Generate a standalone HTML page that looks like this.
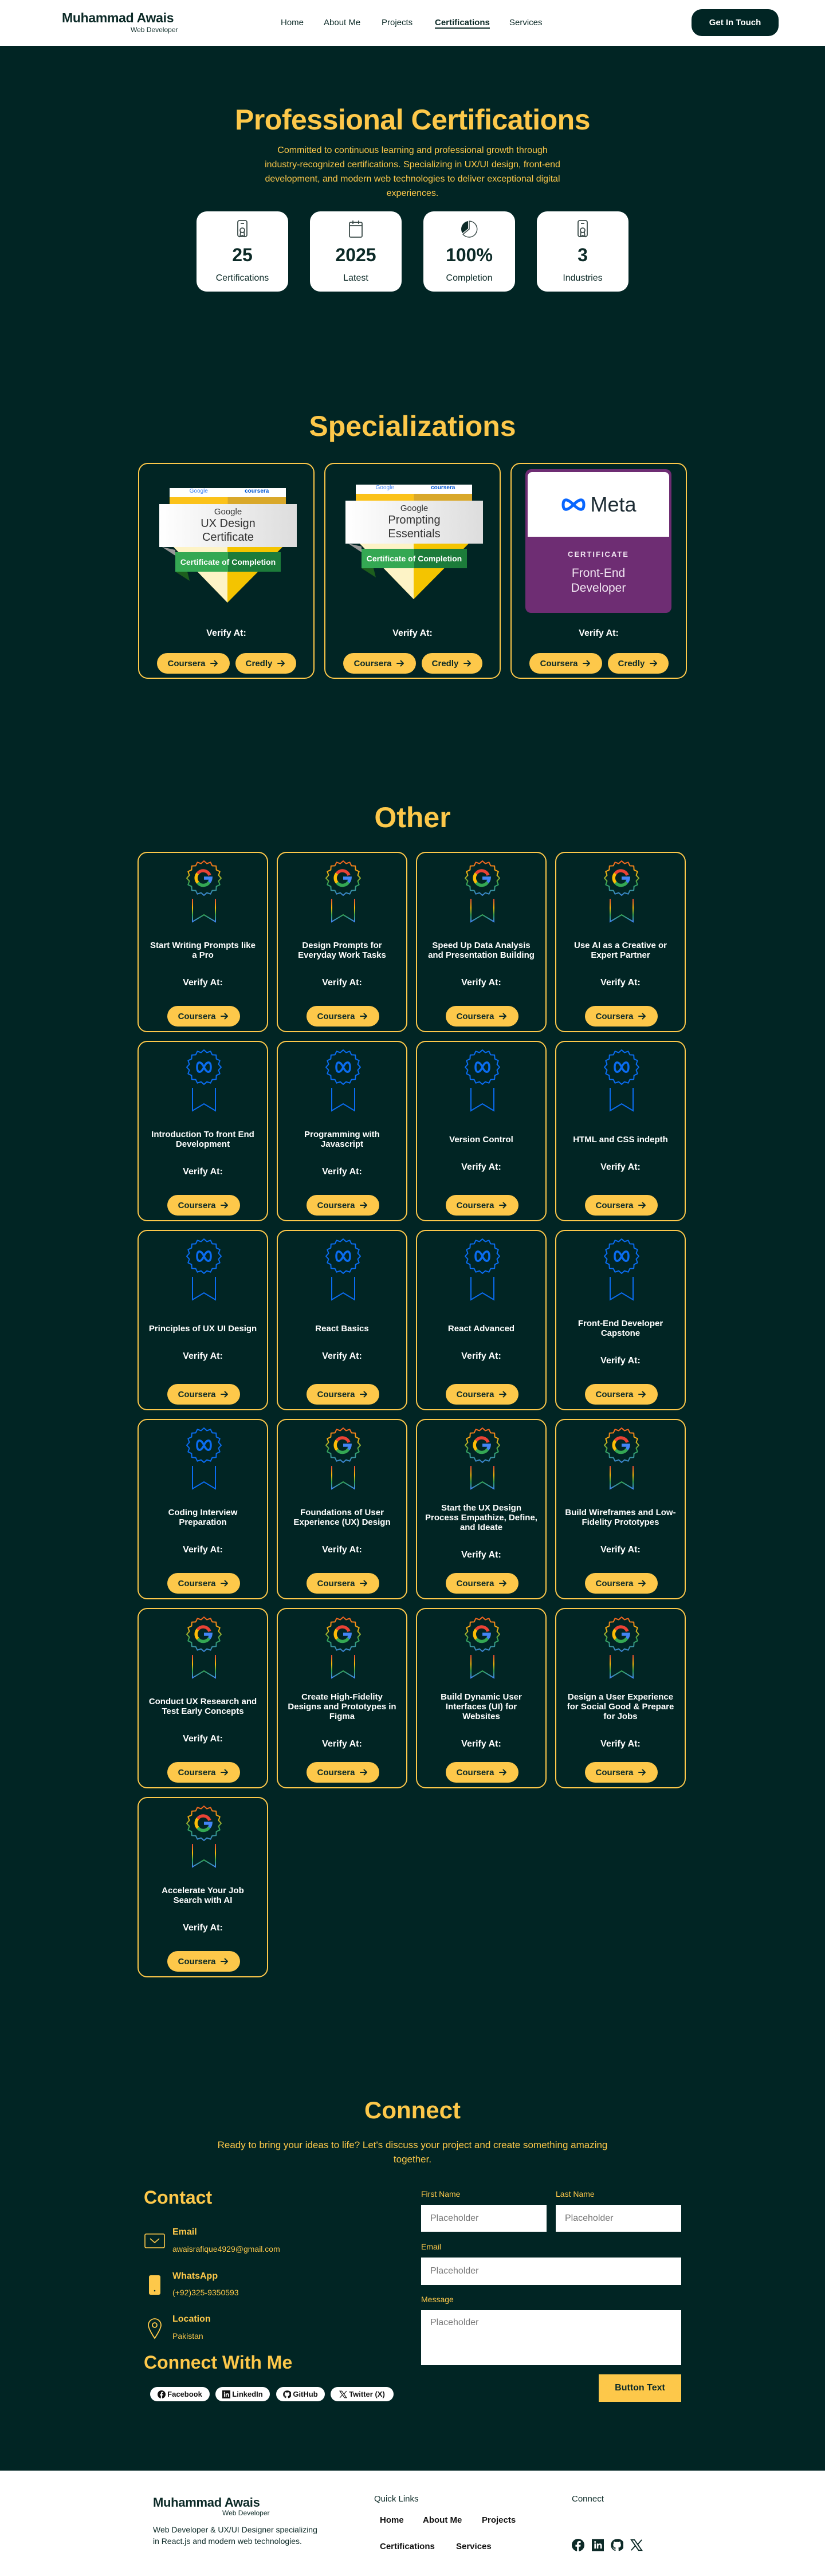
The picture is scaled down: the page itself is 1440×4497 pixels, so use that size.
<!DOCTYPE html>
<html><head><meta charset="utf-8"><title>Certifications</title>
<style>
*{margin:0;padding:0;box-sizing:border-box}
body{width:1440px;height:4497px;background:#012524;font-family:"Liberation Sans",Arial,sans-serif;position:relative;overflow:hidden;color:#fff}
.abs{position:absolute}
.nav{left:0;top:0;width:1440px;height:80px;background:#fff}
.y{color:#fdc84a}
.c{text-align:center}
.stat{position:absolute;top:369px;width:160px;height:140px;background:#fff;border-radius:18px;color:#0c2a27;text-align:center}
.stat svg{position:absolute;left:64px;top:14px}
.card{position:absolute;border:2px solid #fdc84a;border-radius:17px}
.btn{position:absolute;background:#fdc84a;color:#0c2a27;border-radius:18px;font-size:15px;font-weight:700;display:flex;align-items:center;justify-content:center;gap:8px;height:36px}
.oc{width:228px;height:315px}
.oc svg.b{position:absolute;left:81px;top:12px}
.oc .mid{position:absolute;left:8px;right:8px;top:121px;height:148px;display:flex;flex-direction:column;justify-content:center;align-items:center;text-align:center}
.oc .t{font-size:15px;line-height:17px;font-weight:700;color:#fff}
.oc .v{font-size:16px;font-weight:700;margin-top:30px;line-height:20px}
.oc .btn{left:50px;top:267px;width:127px}
.inp{position:absolute;background:#fff;color:#777;font-size:16px;padding-left:16px;display:flex;align-items:center}
.lab{position:absolute;color:#fdc84a;font-size:14px}
.pill{position:absolute;top:4167px;height:25px;background:#fff;border-radius:13px;color:#111;font-size:13px;font-weight:700;display:flex;align-items:center;justify-content:center;gap:3px}
</style></head><body>
<svg width="0" height="0" style="position:absolute">
<defs>
<linearGradient id="gg" x1="0" y1="0" x2="0" y2="1"><stop offset="0" stop-color="#f25c22"/><stop offset=".35" stop-color="#f6b40e"/><stop offset=".65" stop-color="#34a853"/><stop offset="1" stop-color="#3b82d6"/></linearGradient>
<linearGradient id="rg" x1="0" y1="0" x2="0" y2="1"><stop offset="0" stop-color="#ea4335"/><stop offset=".4" stop-color="#fbbc05"/><stop offset=".7" stop-color="#34a853"/><stop offset="1" stop-color="#4285f4"/></linearGradient>
<symbol id="seal" viewBox="0 0 64 64"><polygon fill="none" stroke-width="2" stroke-linejoin="round" points="62,32 57.5,37.07 59.72,43.48 53.62,46.45 53.21,53.21 46.45,53.62 43.48,59.72 37.07,57.5 32,62 26.93,57.5 20.52,59.72 17.55,53.62 10.79,53.21 10.38,46.45 4.28,43.48 6.5,37.07 2,32 6.5,26.93 4.28,20.52 10.38,17.55 10.79,10.79 17.55,10.38 20.52,4.28 26.93,6.5 32,2 37.07,6.5 43.48,4.28 46.45,10.38 53.21,10.79 53.62,17.55 59.72,20.52 57.5,26.93"/></symbol>
<symbol id="gbadge" viewBox="0 0 66 110">
<use href="#seal" x="1" y="0" width="64" height="64" stroke="url(#gg)"/>
<path d="M43 27 A12 12 0 0 0 22 24" fill="none" stroke="#ea4335" stroke-width="5.5"/>
<path d="M22 24 A12 12 0 0 0 22.5 40" fill="none" stroke="#fbbc05" stroke-width="5.5"/>
<path d="M22.5 40 A12 12 0 0 0 42 39" fill="none" stroke="#34a853" stroke-width="5.5"/>
<path d="M42 39 A12 12 0 0 0 45 32 L33 32" fill="none" stroke="#4285f4" stroke-width="5.5"/>
<path d="M13 68 V108 L33 96 L53 108 V68" fill="none" stroke="url(#rg)" stroke-width="2"/>
</symbol>
<symbol id="mbadge" viewBox="0 0 66 110">
<use href="#seal" x="1" y="0" width="64" height="64" stroke="#0a6cf0"/>
<path d="M21 32 C21 21 28 21 33 32 C38 43 45 43 45 32 C45 21 38 21 33 32 C28 43 21 43 21 32 Z" fill="none" stroke="#0a6cf0" stroke-width="3.5"/>
<path d="M13 68 V108 L33 96 L53 108 V68" fill="none" stroke="#0a6cf0" stroke-width="2"/>
</symbol>
<symbol id="arr" viewBox="0 0 16 16"><path d="M2 8H13M8.5 3.5L13 8L8.5 12.5" fill="none" stroke="#0c2a27" stroke-width="2" stroke-linecap="round" stroke-linejoin="round"/></symbol>
</defs></svg>

<!-- NAV -->
<div class="abs nav"></div>
<div class="abs" style="left:108px;top:18px;font-size:23px;font-weight:700;color:#0c2a27;letter-spacing:-0.3px">Muhammad Awais</div>
<div class="abs" style="left:228px;top:45px;font-size:12px;color:#0c2a27">Web Developer</div>
<div class="abs" style="left:490px;top:31px;font-size:15px;color:#0c2a27;font-weight:500">Home</div>
<div class="abs" style="left:565px;top:31px;font-size:15px;color:#0c2a27">About Me</div>
<div class="abs" style="left:666px;top:31px;font-size:15px;color:#0c2a27">Projects</div>
<div class="abs" style="left:759px;top:31px;font-size:15px;color:#0c2a27;font-weight:700;border-bottom:2px solid #0c2a27;line-height:17px">Certifications</div>
<div class="abs" style="left:889px;top:31px;font-size:15px;color:#0c2a27">Services</div>
<div class="abs" style="left:1207px;top:16px;width:152px;height:47px;background:#012524;border-radius:18px;color:#fff;font-size:15px;font-weight:700;display:flex;align-items:center;justify-content:center">Get In Touch</div>

<!-- HERO -->
<div class="abs y c" style="left:0;width:1440px;top:180px;font-size:50px;font-weight:700;letter-spacing:-0.5px">Professional Certifications</div>
<div class="abs y c" style="left:410px;width:620px;top:250px;font-size:16px;line-height:25px">Committed to continuous learning and professional growth through<br>industry-recognized certifications. Specializing in UX/UI design, front-end<br>development, and modern web technologies to deliver exceptional digital<br>experiences.</div>

<div class="stat" style="left:343px"><svg width="32" height="34" viewBox="0 0 32 34" fill="none" stroke="#3a4a48" stroke-width="1.8"><rect x="8" y="2" width="16" height="28" rx="3"/><path d="M13 7h6"/><circle cx="16" cy="19" r="4"/><path d="M13 22l-1 8 4-2 4 2-1-8"/></svg><div style="position:absolute;left:0;right:0;top:58px;font-size:32px;font-weight:700">25</div><div style="position:absolute;left:0;right:0;top:108px;font-size:16px">Certifications</div></div>
<div class="stat" style="left:541px"><svg width="32" height="34" viewBox="0 0 32 34" fill="none" stroke="#3a4a48" stroke-width="1.8"><rect x="5" y="5" width="22" height="26" rx="2"/><path d="M5 11h22M11 2v6M21 2v6M11 5h10"/></svg><div style="position:absolute;left:0;right:0;top:58px;font-size:32px;font-weight:700">2025</div><div style="position:absolute;left:0;right:0;top:108px;font-size:16px">Latest</div></div>
<div class="stat" style="left:739px"><svg width="32" height="34" viewBox="0 0 32 34"><path d="M16 3A14 14 0 1 1 5 26L16 17Z" fill="none" stroke="#3a4a48" stroke-width="1.5"/><path d="M14 3A14 14 0 0 0 4 24L14 16Z" fill="#0c2a27"/></svg><div style="position:absolute;left:0;right:0;top:58px;font-size:32px;font-weight:700">100%</div><div style="position:absolute;left:0;right:0;top:108px;font-size:16px">Completion</div></div>
<div class="stat" style="left:937px"><svg width="32" height="34" viewBox="0 0 32 34" fill="none" stroke="#3a4a48" stroke-width="1.8"><rect x="8" y="2" width="16" height="28" rx="3"/><path d="M13 7h6"/><circle cx="16" cy="19" r="4"/><path d="M13 22l-1 8 4-2 4 2-1-8"/></svg><div style="position:absolute;left:0;right:0;top:58px;font-size:32px;font-weight:700">3</div><div style="position:absolute;left:0;right:0;top:108px;font-size:16px">Industries</div></div>

<!-- SPECIALIZATIONS -->
<div class="abs y c" style="left:0;width:1440px;top:715px;font-size:50px;font-weight:700">Specializations</div>

<div class="card" style="left:241px;top:808px;width:308px;height:377px">
 <svg class="abs" style="left:0;top:0" width="308" height="260">
  <polygon points="60,145 250,145 154,242" fill="#f4c400"/>
  <polygon points="60,145 154,145 154,242" fill="#fdf3c6"/>
  <polygon points="40,145 63,160 63,150" fill="#999"/>
  <polygon points="63,188 88,204 84,188" fill="#1d5e1d"/>
 </svg>
 <div class="abs" style="left:53px;top:42px;width:203px;height:16px;background:#fff;font-size:10px;display:flex"><span style="width:50%;text-align:center;color:#4285f4">Google</span><span style="width:50%;text-align:center;color:#0056d2;font-weight:700">coursera</span></div>
 <div class="abs" style="left:53px;top:58px;width:203px;height:12px;background:linear-gradient(90deg,#fbc21a 50%,#d9a82a 50%)"></div>
 <div class="abs c" style="left:35px;top:70px;width:240px;height:75px;background:linear-gradient(90deg,#fff,#ddd);color:#333;padding-top:5px"><div style="font-size:15px">Google</div><div style="font-size:20px;line-height:24px">UX Design<br>Certificate</div></div>
 <div class="abs" style="left:63px;top:154px;width:184px;height:34px;background:linear-gradient(90deg,#34a853 50%,#1c7c3a 50%);color:#fff;font-size:14px;font-weight:700;display:flex;align-items:center;justify-content:center">Certificate of Completion</div>
 <div class="abs c" style="left:0;width:304px;top:287px;font-size:16px;font-weight:700">Verify At:</div>
 <div class="btn" style="left:31px;top:330px;width:127px">Coursera<svg width="16" height="16"><use href="#arr"/></svg></div>
 <div class="btn" style="left:168px;top:330px;width:106px">Credly<svg width="16" height="16"><use href="#arr"/></svg></div>
</div>

<div class="card" style="left:566px;top:808px;width:308px;height:377px">
 <svg class="abs" style="left:0;top:-6px" width="308" height="260">
  <polygon points="60,145 250,145 154,242" fill="#f4c400"/>
  <polygon points="60,145 154,145 154,242" fill="#fdf3c6"/>
  <polygon points="40,145 63,160 63,150" fill="#999"/>
  <polygon points="63,188 88,204 84,188" fill="#1d5e1d"/>
 </svg>
 <div class="abs" style="left:53px;top:36px;width:203px;height:16px;background:#fff;font-size:10px;display:flex"><span style="width:50%;text-align:center;color:#4285f4">Google</span><span style="width:50%;text-align:center;color:#0056d2;font-weight:700">coursera</span></div>
 <div class="abs" style="left:53px;top:52px;width:203px;height:12px;background:linear-gradient(90deg,#fbc21a 50%,#d9a82a 50%)"></div>
 <div class="abs c" style="left:35px;top:64px;width:240px;height:75px;background:linear-gradient(90deg,#fff,#ddd);color:#333;padding-top:5px"><div style="font-size:15px">Google</div><div style="font-size:20px;line-height:24px">Prompting<br>Essentials</div></div>
 <div class="abs" style="left:63px;top:148px;width:184px;height:34px;background:linear-gradient(90deg,#34a853 50%,#1c7c3a 50%);color:#fff;font-size:14px;font-weight:700;display:flex;align-items:center;justify-content:center">Certificate of Completion</div>
 <div class="abs c" style="left:0;width:304px;top:287px;font-size:16px;font-weight:700">Verify At:</div>
 <div class="btn" style="left:31px;top:330px;width:127px">Coursera<svg width="16" height="16"><use href="#arr"/></svg></div>
 <div class="btn" style="left:168px;top:330px;width:106px">Credly<svg width="16" height="16"><use href="#arr"/></svg></div>
</div>

<div class="card" style="left:891px;top:808px;width:308px;height:377px">
 <div class="abs" style="left:24px;top:9px;width:255px;height:251px;background:#6e2d73;border-radius:10px"></div>
 <div class="abs" style="left:28px;top:14px;width:247px;height:113px;background:#fff;border-radius:8px 8px 0 0;display:flex;align-items:center;justify-content:center;gap:6px">
  <svg width="46" height="30" viewBox="0 0 46 30"><path d="M5 15 C5 4 12 4 23 15 C34 26 41 26 41 15 C41 4 34 4 23 15 C12 26 5 26 5 15Z" fill="none" stroke="#0866ff" stroke-width="5"/></svg>
  <span style="font-size:36px;color:#1c2b33">Meta</span></div>
 <div class="abs c" style="left:24px;width:255px;top:150px;font-size:13px;letter-spacing:2px;color:#f1e6f2;font-weight:700">CERTIFICATE</div>
 <div class="abs c" style="left:24px;width:255px;top:178px;font-size:21px;line-height:26px;color:#f1e6f2">Front-End<br>Developer</div>
 <div class="abs c" style="left:0;width:304px;top:287px;font-size:16px;font-weight:700">Verify At:</div>
 <div class="btn" style="left:31px;top:330px;width:127px">Coursera<svg width="16" height="16"><use href="#arr"/></svg></div>
 <div class="btn" style="left:168px;top:330px;width:106px">Credly<svg width="16" height="16"><use href="#arr"/></svg></div>
</div>

<!-- OTHER -->
<div class="abs y c" style="left:0;width:1440px;top:1398px;font-size:50px;font-weight:700">Other</div>

<div class="card oc" style="left:240px;top:1487px"><svg class="b" width="66" height="110"><use href="#gbadge"/></svg><div class="mid"><div class="t">Start Writing Prompts like<br>a Pro</div><div class="v">Verify At:</div></div><div class="btn">Coursera<svg width="16" height="16"><use href="#arr"/></svg></div></div>
<div class="card oc" style="left:483px;top:1487px"><svg class="b" width="66" height="110"><use href="#gbadge"/></svg><div class="mid"><div class="t">Design Prompts for<br>Everyday Work Tasks</div><div class="v">Verify At:</div></div><div class="btn">Coursera<svg width="16" height="16"><use href="#arr"/></svg></div></div>
<div class="card oc" style="left:726px;top:1487px"><svg class="b" width="66" height="110"><use href="#gbadge"/></svg><div class="mid"><div class="t">Speed Up Data Analysis<br>and Presentation Building</div><div class="v">Verify At:</div></div><div class="btn">Coursera<svg width="16" height="16"><use href="#arr"/></svg></div></div>
<div class="card oc" style="left:969px;top:1487px"><svg class="b" width="66" height="110"><use href="#gbadge"/></svg><div class="mid"><div class="t">Use AI as a Creative or<br>Expert Partner</div><div class="v">Verify At:</div></div><div class="btn">Coursera<svg width="16" height="16"><use href="#arr"/></svg></div></div>

<div class="card oc" style="left:240px;top:1817px"><svg class="b" width="66" height="110"><use href="#mbadge"/></svg><div class="mid"><div class="t">Introduction To front End<br>Development</div><div class="v">Verify At:</div></div><div class="btn">Coursera<svg width="16" height="16"><use href="#arr"/></svg></div></div>
<div class="card oc" style="left:483px;top:1817px"><svg class="b" width="66" height="110"><use href="#mbadge"/></svg><div class="mid"><div class="t">Programming with<br>Javascript</div><div class="v">Verify At:</div></div><div class="btn">Coursera<svg width="16" height="16"><use href="#arr"/></svg></div></div>
<div class="card oc" style="left:726px;top:1817px"><svg class="b" width="66" height="110"><use href="#mbadge"/></svg><div class="mid"><div class="t">Version Control</div><div class="v">Verify At:</div></div><div class="btn">Coursera<svg width="16" height="16"><use href="#arr"/></svg></div></div>
<div class="card oc" style="left:969px;top:1817px"><svg class="b" width="66" height="110"><use href="#mbadge"/></svg><div class="mid"><div class="t">HTML and CSS indepth</div><div class="v">Verify At:</div></div><div class="btn">Coursera<svg width="16" height="16"><use href="#arr"/></svg></div></div>

<div class="card oc" style="left:240px;top:2147px"><svg class="b" width="66" height="110"><use href="#mbadge"/></svg><div class="mid"><div class="t">Principles of UX UI Design</div><div class="v">Verify At:</div></div><div class="btn">Coursera<svg width="16" height="16"><use href="#arr"/></svg></div></div>
<div class="card oc" style="left:483px;top:2147px"><svg class="b" width="66" height="110"><use href="#mbadge"/></svg><div class="mid"><div class="t">React Basics</div><div class="v">Verify At:</div></div><div class="btn">Coursera<svg width="16" height="16"><use href="#arr"/></svg></div></div>
<div class="card oc" style="left:726px;top:2147px"><svg class="b" width="66" height="110"><use href="#mbadge"/></svg><div class="mid"><div class="t">React Advanced</div><div class="v">Verify At:</div></div><div class="btn">Coursera<svg width="16" height="16"><use href="#arr"/></svg></div></div>
<div class="card oc" style="left:969px;top:2147px"><svg class="b" width="66" height="110"><use href="#mbadge"/></svg><div class="mid"><div class="t">Front-End Developer<br>Capstone</div><div class="v">Verify At:</div></div><div class="btn">Coursera<svg width="16" height="16"><use href="#arr"/></svg></div></div>

<div class="card oc" style="left:240px;top:2477px"><svg class="b" width="66" height="110"><use href="#mbadge"/></svg><div class="mid"><div class="t">Coding Interview<br>Preparation</div><div class="v">Verify At:</div></div><div class="btn">Coursera<svg width="16" height="16"><use href="#arr"/></svg></div></div>
<div class="card oc" style="left:483px;top:2477px"><svg class="b" width="66" height="110"><use href="#gbadge"/></svg><div class="mid"><div class="t">Foundations of User<br>Experience (UX) Design</div><div class="v">Verify At:</div></div><div class="btn">Coursera<svg width="16" height="16"><use href="#arr"/></svg></div></div>
<div class="card oc" style="left:726px;top:2477px"><svg class="b" width="66" height="110"><use href="#gbadge"/></svg><div class="mid"><div class="t">Start the UX Design<br>Process Empathize, Define,<br>and Ideate</div><div class="v">Verify At:</div></div><div class="btn">Coursera<svg width="16" height="16"><use href="#arr"/></svg></div></div>
<div class="card oc" style="left:969px;top:2477px"><svg class="b" width="66" height="110"><use href="#gbadge"/></svg><div class="mid"><div class="t">Build Wireframes and Low-<br>Fidelity Prototypes</div><div class="v">Verify At:</div></div><div class="btn">Coursera<svg width="16" height="16"><use href="#arr"/></svg></div></div>

<div class="card oc" style="left:240px;top:2807px"><svg class="b" width="66" height="110"><use href="#gbadge"/></svg><div class="mid"><div class="t">Conduct UX Research and<br>Test Early Concepts</div><div class="v">Verify At:</div></div><div class="btn">Coursera<svg width="16" height="16"><use href="#arr"/></svg></div></div>
<div class="card oc" style="left:483px;top:2807px"><svg class="b" width="66" height="110"><use href="#gbadge"/></svg><div class="mid"><div class="t">Create High-Fidelity<br>Designs and Prototypes in<br>Figma</div><div class="v">Verify At:</div></div><div class="btn">Coursera<svg width="16" height="16"><use href="#arr"/></svg></div></div>
<div class="card oc" style="left:726px;top:2807px"><svg class="b" width="66" height="110"><use href="#gbadge"/></svg><div class="mid"><div class="t">Build Dynamic User<br>Interfaces (UI) for<br>Websites</div><div class="v">Verify At:</div></div><div class="btn">Coursera<svg width="16" height="16"><use href="#arr"/></svg></div></div>
<div class="card oc" style="left:969px;top:2807px"><svg class="b" width="66" height="110"><use href="#gbadge"/></svg><div class="mid"><div class="t">Design a User Experience<br>for Social Good &amp; Prepare<br>for Jobs</div><div class="v">Verify At:</div></div><div class="btn">Coursera<svg width="16" height="16"><use href="#arr"/></svg></div></div>

<div class="card oc" style="left:240px;top:3137px"><svg class="b" width="66" height="110"><use href="#gbadge"/></svg><div class="mid"><div class="t">Accelerate Your Job<br>Search with AI</div><div class="v">Verify At:</div></div><div class="btn">Coursera<svg width="16" height="16"><use href="#arr"/></svg></div></div>

<!-- CONNECT -->
<div class="abs y c" style="left:0;width:1440px;top:3660px;font-size:42px;font-weight:700">Connect</div>
<div class="abs y c" style="left:340px;width:760px;top:3732px;font-size:17px;line-height:25px">Ready to bring your ideas to life? Let's discuss your project and create something amazing<br>together.</div>

<div class="abs y" style="left:251px;top:3818px;font-size:32px;font-weight:700">Contact</div>
<svg class="abs" style="left:252px;top:3899px" width="36" height="26" viewBox="0 0 36 26" fill="none" stroke="#fdc84a" stroke-width="1.6"><rect x="1" y="1" width="34" height="24" rx="2"/><path d="M10 9l8 7 8-7"/></svg>
<div class="abs y" style="left:301px;top:3888px;font-size:16px;font-weight:700">Email</div>
<div class="abs y" style="left:301px;top:3918px;font-size:14px">awaisrafique4929@gmail.com</div>
<svg class="abs" style="left:260px;top:3972px" width="20" height="34" viewBox="0 0 20 34"><rect x="0" y="0" width="20" height="34" rx="3" fill="#fdc84a"/><circle cx="10" cy="27" r="1.3" fill="#012524"/></svg>
<div class="abs y" style="left:301px;top:3965px;font-size:16px;font-weight:700">WhatsApp</div>
<div class="abs y" style="left:301px;top:3994px;font-size:14px">(+92)325-9350593</div>
<svg class="abs" style="left:257px;top:4046px" width="26" height="38" viewBox="0 0 26 38" fill="none" stroke="#fdc84a" stroke-width="1.8"><path d="M13 36C13 36 2 20 2 13A11 11 0 0 1 24 13C24 20 13 36 13 36Z"/><circle cx="13" cy="13" r="4"/></svg>
<div class="abs y" style="left:301px;top:4040px;font-size:16px;font-weight:700">Location</div>
<div class="abs y" style="left:301px;top:4070px;font-size:14px">Pakistan</div>
<div class="abs y" style="left:251px;top:4106px;font-size:32px;font-weight:700">Connect With Me</div>

<div class="pill" style="left:262px;width:104px"><svg width="14" height="14" viewBox="0 0 24 24"><circle cx="12" cy="12" r="12" fill="#111"/><path d="M13.5 24V15h3l.5-3.5h-3.5V9.3c0-1 .3-1.7 1.8-1.7H17V4.5c-.3 0-1.4-.1-2.6-.1-2.6 0-4.4 1.6-4.4 4.5v2.6H7V15h3v9z" fill="#fff"/></svg>Facebook</div>
<div class="pill" style="left:376px;width:95px"><svg width="14" height="14" viewBox="0 0 24 24"><rect width="24" height="24" fill="#111"/><path d="M5 9h3v10H5zM6.5 4a1.7 1.7 0 1 1 0 3.4 1.7 1.7 0 0 1 0-3.4zM10 9h3v1.4c.5-.9 1.6-1.6 3.2-1.6 3 0 3.8 2 3.8 4.6V19h-3v-5c0-1.3-.3-2.4-1.600-2.4S13 12.6 13 14v5h-3z" fill="#fff"/></svg>LinkedIn</div>
<div class="pill" style="left:482px;width:85px"><svg width="14" height="14" viewBox="0 0 24 24"><path d="M12 .5A11.5 11.5 0 0 0 8.4 23c.6.1.8-.3.8-.6v-2c-3.2.7-3.9-1.5-3.9-1.5-.5-1.3-1.3-1.7-1.3-1.7-1-.7.1-.7.1-.7 1.2.1 1.800 1.2 1.8 1.2 1 1.8 2.7 1.3 3.4 1 .1-.8.4-1.3.7-1.6-2.6-.3-5.3-1.3-5.3-5.7 0-1.3.5-2.3 1.2-3.1-.1-.3-.5-1.5.1-3.1 0 0 1-.3 3.2 1.2a11 11 0 0 1 5.8 0c2.2-1.5 3.2-1.2 3.2-1.2.6 1.6.2 2.8.1 3.1.8.8 1.2 1.8 1.2 3.1 0 4.4-2.7 5.4-5.3 5.7.4.4.8 1.1.8 2.2v3.3c0 .3.2.7.8.6A11.5 11.5 0 0 0 12 .5z" fill="#111"/></svg>GitHub</div>
<div class="pill" style="left:577px;width:110px"><svg width="14" height="14" viewBox="0 0 24 24"><path d="M2 2h6l14 20h-6zM2 22L10 13M14 11l8-9" stroke="#111" stroke-width="2" fill="none"/></svg>Twitter (X)</div>

<div class="lab" style="left:735px;top:3822px">First Name</div>
<div class="lab" style="left:970px;top:3822px">Last Name</div>
<div class="inp" style="left:735px;top:3849px;width:219px;height:47px">Placeholder</div>
<div class="inp" style="left:970px;top:3849px;width:219px;height:47px">Placeholder</div>
<div class="lab" style="left:735px;top:3914px">Email</div>
<div class="inp" style="left:735px;top:3941px;width:454px;height:48px">Placeholder</div>
<div class="lab" style="left:735px;top:4006px">Message</div>
<div class="inp" style="left:735px;top:4033px;width:454px;height:96px;align-items:flex-start;padding-top:13px">Placeholder</div>
<div class="abs" style="left:1045px;top:4145px;width:144px;height:48px;background:#fdc84a;color:#0c2a27;font-size:16px;font-weight:700;display:flex;align-items:center;justify-content:center">Button Text</div>

<!-- FOOTER -->
<div class="abs" style="left:0;top:4313px;width:1440px;height:184px;background:#fff"></div>
<div class="abs" style="left:267px;top:4356px;font-size:22px;font-weight:700;color:#0c2a27;letter-spacing:-0.3px">Muhammad Awais</div>
<div class="abs" style="left:388px;top:4380px;font-size:12px;color:#0c2a27">Web Developer</div>
<div class="abs" style="left:267px;top:4406px;font-size:14px;line-height:20px;color:#0c2a27">Web Developer &amp; UX/UI Designer specializing<br>in React.js and modern web technologies.</div>
<div class="abs" style="left:653px;top:4354px;font-size:15px;font-weight:500;color:#0c2a27">Quick Links</div>
<div class="abs" style="left:663px;top:4391px;font-size:15px;font-weight:700;color:#111">Home</div>
<div class="abs" style="left:738px;top:4391px;font-size:15px;font-weight:700;color:#111">About Me</div>
<div class="abs" style="left:841px;top:4391px;font-size:15px;font-weight:700;color:#111">Projects</div>
<div class="abs" style="left:663px;top:4437px;font-size:15px;font-weight:700;color:#111">Certifications</div>
<div class="abs" style="left:796px;top:4437px;font-size:15px;font-weight:700;color:#111">Services</div>
<div class="abs" style="left:998px;top:4354px;font-size:15px;font-weight:500;color:#0c2a27">Connect</div>
<svg class="abs" style="left:998px;top:4432px" width="22" height="22" viewBox="0 0 24 24"><circle cx="12" cy="12" r="12" fill="#0c2a27"/><path d="M13.5 24V15h3l.5-3.5h-3.5V9.3c0-1 .3-1.7 1.8-1.7H17V4.5c-.3 0-1.4-.1-2.6-.1-2.6 0-4.4 1.6-4.4 4.5v2.6H7V15h3v9z" fill="#fff"/></svg>
<svg class="abs" style="left:1033px;top:4432px" width="21" height="22" viewBox="0 0 24 24"><rect width="24" height="24" fill="#0c2a27"/><path d="M5 9h3v10H5zM6.5 4a1.7 1.7 0 1 1 0 3.4 1.7 1.7 0 0 1 0-3.4zM10 9h3v1.4c.5-.9 1.6-1.6 3.2-1.6 3 0 3.8 2 3.8 4.6V19h-3v-5c0-1.3-.3-2.4-1.6-2.4S13 12.6 13 14v5h-3z" fill="#fff"/></svg>
<svg class="abs" style="left:1066px;top:4432px" width="22" height="22" viewBox="0 0 24 24"><path d="M12 .5A11.5 11.5 0 0 0 8.4 23c.6.1.8-.3.8-.6v-2c-3.2.7-3.9-1.5-3.9-1.5-.5-1.3-1.3-1.7-1.3-1.7-1-.7.1-.7.1-.7 1.2.1 1.8 1.2 1.8 1.2 1 1.8 2.7 1.3 3.4 1 .1-.8.4-1.3.7-1.6-2.6-.3-5.3-1.3-5.3-5.7 0-1.3.5-2.3 1.2-3.1-.1-.3-.5-1.5.1-3.1 0 0 1-.3 3.2 1.2a11 11 0 0 1 5.8 0c2.2-1.5 3.2-1.2 3.2-1.2.6 1.6.2 2.8.1 3.1.8.8 1.2 1.8 1.2 3.1 0 4.4-2.7 5.4-5.3 5.7.4.4.8 1.1.8 2.2v3.3c0 .3.2.7.8.6A11.5 11.5 0 0 0 12 .5z" fill="#0c2a27"/></svg>
<svg class="abs" style="left:1100px;top:4432px" width="22" height="22" viewBox="0 0 24 24"><path d="M2 2h6l14 20h-6zM2 22L10 13M14 11l8-9" stroke="#0c2a27" stroke-width="2" fill="none"/></svg>
</body></html>
